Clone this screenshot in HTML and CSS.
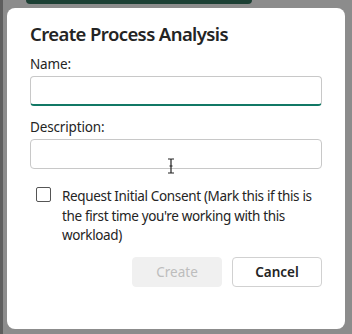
FILE: index.html
```html
<!DOCTYPE html>
<html lang="en">
<head>
    <meta charset="UTF-8">
    <title>Create Process Analysis</title>
    <link rel="stylesheet" href="styles.css">
</head>
<body>
    <div class="backdrop">
        <div class="topbar"></div>
        <div class="dialog">
            <h1>Create Process Analysis</h1>
            <label class="field-label" for="name">Name:</label>
            <input type="text" id="name" class="field active">
            <label class="field-label" for="desc">Description:</label>
            <div class="field-wrap">
                <input type="text" id="desc" class="field">
                <svg class="ibeam" width="8" height="16" viewBox="0 0 8 16">
                    <path d="M1 1h2.2c.5 0 .8.3.8.8M7 1H4.8c-.5 0-.8.3-.8.8v12.4c0 .5-.3.8-.8.8H1M7 15H4.8c-.5 0-.8-.3-.8-.8M2.5 8h3" fill="none" stroke="#222" stroke-width="1.2"/>
                </svg>
            </div>
            <div class="consent">
                <span class="box"></span>
                <span class="consent-text">Request Initial Consent (Mark this if this is<br>the first time you're working with this<br>workload)</span>
            </div>
            <div class="actions">
                <button class="btn disabled">Create</button>
                <button class="btn">Cancel</button>
            </div>
        </div>
    </div>
</body>
</html>
```

FILE: styles.css
```css
body { margin: 0; font-family: "Noto Sans", "Open Sans", sans-serif; color: #242424; }
.backdrop { width: 352px; height: 334px; background: #8c8c8c; border-left: 3px solid #5e5e5e; box-sizing: border-box; overflow: hidden; }
.topbar { height: 4px; width: 226px; margin-left: 23px; background: #1b3f33; border-radius: 0 0 6px 6px; }
.dialog { margin: 4px 0 0 4px; width: 338px; height: 321px; background: #fff; border-radius: 8px; box-sizing: border-box; padding: 12px 23px 0 23px; }
h1 { margin: 0 0 6px 0; font-size: 18.5px; font-weight: 600; line-height: 28px; letter-spacing: -0.6px; }
.field-label { display: block; font-size: 13.5px; line-height: 20px; letter-spacing: -0.15px; margin-bottom: 2px; }
.field { display: block; box-sizing: border-box; width: 292px; height: 30px; border: 1px solid #c8c8c8; border-radius: 4px; margin: 0 0 11px 0; padding: 0 8px; background: #fff; }
.field.active { border-bottom: 2px solid #117865; }
.field-wrap { position: relative; }
.ibeam { position: absolute; left: 137px; top: 19px; }
.consent { display: flex; align-items: flex-start; gap: 11px; margin: 16px 0 0 6px; }
.box { flex: none; width: 15px; height: 15px; box-sizing: border-box; border: 1px solid #555; border-radius: 2px; margin-top: 2px; }
.consent-text { font-size: 13.5px; line-height: 19.5px; letter-spacing: -0.35px; white-space: nowrap; padding-top: 2px; }
.actions { display: flex; justify-content: flex-end; gap: 10px; margin-top: 11px; }
.btn { width: 90px; height: 30px; border: 1px solid #d1d1d1; border-radius: 4px; background: #fff; font-family: inherit; font-size: 13.5px; font-weight: 600; color: #242424; }
.btn.disabled { background: #f0f0f0; border-color: #f0f0f0; color: #bdbdbd; font-weight: 400; }
```
